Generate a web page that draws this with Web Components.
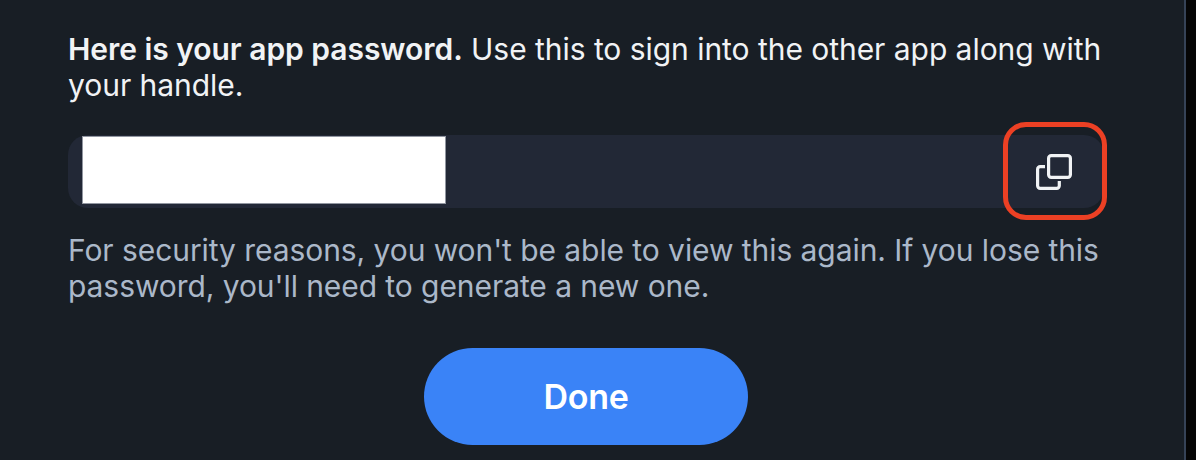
<!DOCTYPE html>
<html lang="en">
<head>
<meta charset="utf-8">
<title>App password</title>
<style>
html, body { margin: 0; height: 100%; background: #050505; overflow: hidden; }
body { font-family: Inter, sans-serif; }
</style>
</head>
<body>
<password-dialog></password-dialog>
<script>
const define = (name, html) => customElements.define(name, class extends HTMLElement {
  constructor() {
    super();
    this.attachShadow({ mode: 'open' }).innerHTML = html;
  }
});

define('dialog-text', `
<style>
:host { display: block; font-size: 30px; line-height: 36px; letter-spacing: -0.04px; color: #f1f3f5; white-space: nowrap; }
:host([muted]) { color: #abb8c9; letter-spacing: -0.07px; }
::slotted(b) { font-weight: 600; }
</style><slot></slot>`);

define('copy-button', `
<style>
:host { display: block; box-sizing: border-box; width: 104px; height: 98px; border: 5px solid #ec4024; border-radius: 23px; }
button { all: unset; display: flex; width: 100%; height: 100%; align-items: center; justify-content: center; }
svg { display: block; position: relative; left: -1px; top: 1.5px; }
</style>
<button aria-label="Copy password">
<svg width="36" height="36" viewBox="0 0 36 36" fill="none" stroke="#f1f3f5" stroke-width="3.2" stroke-linejoin="round">
<rect x="12.6" y="1.6" width="21.8" height="21.8" rx="2.6"/>
<path d="M9 12.7H4.2a2.6 2.6 0 0 0-2.6 2.6v16.5a2.6 2.6 0 0 0 2.6 2.6h16.5a2.6 2.6 0 0 0 2.6-2.6V27"/>
</svg></button>`);

define('password-field', `
<style>
:host { display: block; position: relative; box-sizing: border-box; height: 73px; padding: 1px 0 0 14px; border-radius: 20px; background: #222836; }
.value { width: 364px; height: 68px; box-sizing: border-box; background: #fff; border: 1px solid #9196a0; }
copy-button { position: absolute; right: -3px; top: -13.5px; }
</style>
<div class="value"></div><copy-button></copy-button>`);

define('pill-button', `
<style>
:host { display: block; width: 324px; height: 97px; }
button { all: unset; display: flex; align-items: center; justify-content: center; width: 100%; height: 100%; border-radius: 999px; background: #3a83f7; color: #fff; font-size: 34px; font-weight: 600; letter-spacing: -0.3px; }
</style>
<button><slot></slot></button>`);

define('password-dialog', `
<style>
:host { display: flex; flex-direction: column; box-sizing: border-box; width: 1186px; height: 460px; padding: 31px 80px 0 68px; background: #181e25; border-right: 2px solid #364357; }
password-field { margin-top: 32px; }
.note { margin-top: 24px; }
pill-button { align-self: center; margin-top: 44px; }
</style>
<dialog-text><b>Here is your app password.</b> Use this to sign into the other app along with<br>your handle.</dialog-text>
<password-field></password-field>
<dialog-text class="note" muted>For security reasons, you won't be able to view this again. If you lose this<br>password, you'll need to generate a new one.</dialog-text>
<pill-button>Done</pill-button>`);
</script>
</body>
</html>
